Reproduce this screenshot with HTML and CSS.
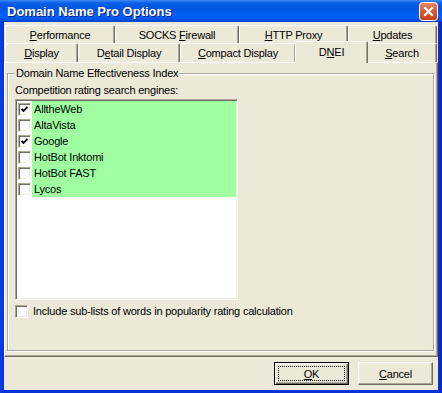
FILE: index.html
```html
<!DOCTYPE html>
<html lang="en">
<head>
    <meta charset="UTF-8">
    <title>Domain Name Pro Options</title>
    <link rel="stylesheet" href="styles.css">
</head>
<body>
    <div class="window">
        <!-- Title bar -->
        <div class="titlebar">
            <span class="title">Domain Name Pro Options</span>
            <span class="close" aria-label="Close">
                <svg width="19" height="19" viewBox="0 0 19 19">
                    <defs>
                        <linearGradient id="closeGrad" x1="0" y1="0" x2="0" y2="1">
                            <stop offset="0" stop-color="#e98c6a"/>
                            <stop offset="0.5" stop-color="#d9582f"/>
                            <stop offset="1" stop-color="#c4401b"/>
                        </linearGradient>
                    </defs>
                    <rect x="0.5" y="0.5" width="18" height="18" rx="3" fill="url(#closeGrad)" stroke="#fff"/>
                    <path d="M6 6 L13 13 M13 6 L6 13" stroke="#fff" stroke-width="2.2" stroke-linecap="square"/>
                </svg>
            </span>
        </div>

        <div class="client">
            <!-- Tabs, two rows -->
            <div class="tabs">
                <div class="tab-row row1">
                    <div class="tab" style="width:110px"><span><u>P</u>erformance</span></div>
                    <div class="tab" style="width:124px"><span>SOCKS <u>F</u>irewall</span></div>
                    <div class="tab" style="width:109px"><span><u>H</u>TTP Proxy</span></div>
                    <div class="tab" style="width:89px"><span><u>U</u>pdates</span></div>
                </div>
                <div class="tab-row row2">
                    <div class="tab" style="width:73px"><span><u>D</u>isplay</span></div>
                    <div class="tab" style="width:102px"><span>D<u>e</u>tail Display</span></div>
                    <div class="tab" style="width:116px"><span><u>C</u>ompact Display</span></div>
                    <div class="tab active" style="width:73px"><span>D<u>N</u>EI</span></div>
                    <div class="tab" style="width:70px"><span><u>S</u>earch</span></div>
                </div>
            </div>

            <div class="panel">
                <div class="group">
                    <span class="group-title">Domain Name Effectiveness Index</span>
                    <div class="list-label">Competition rating search engines:</div>
                    <div class="listbox">
                        <div class="item"><span class="check"><svg width="7" height="7" viewBox="0 0 7 7"><polyline points="0.5,3 2.5,5 6.5,1" fill="none" stroke="#000" stroke-width="1.8"/></svg></span><span class="item-text">AlltheWeb</span></div>
                        <div class="item"><span class="check"></span><span class="item-text">AltaVista</span></div>
                        <div class="item"><span class="check"><svg width="7" height="7" viewBox="0 0 7 7"><polyline points="0.5,3 2.5,5 6.5,1" fill="none" stroke="#000" stroke-width="1.8"/></svg></span><span class="item-text">Google</span></div>
                        <div class="item"><span class="check"></span><span class="item-text">HotBot Inktomi</span></div>
                        <div class="item"><span class="check"></span><span class="item-text">HotBot FAST</span></div>
                        <div class="item"><span class="check"></span><span class="item-text">Lycos</span></div>
                    </div>
                    <div class="option">
                        <span class="check"></span>
                        <span>Include sub-lists of words in popularity rating calculation</span>
                    </div>
                </div>
            </div>

            <div class="buttons">
                <button class="btn default"><span class="focus"><u>O</u>K</span></button>
                <button class="btn"><span><u>C</u>ancel</span></button>
            </div>
        </div>
    </div>
</body>
</html>
```

FILE: styles.css
```css
* {
    margin: 0;
    padding: 0;
    box-sizing: border-box;
}

html, body {
    width: 442px;
    height: 393px;
    overflow: hidden;
}

body {
    font-family: "Liberation Sans", Arial, sans-serif;
    font-size: 11px;
    letter-spacing: -0.2px;
    color: #000;
}

.window {
    width: 442px;
    height: 393px;
    display: flex;
    flex-direction: column;
    background: linear-gradient(to right, #0a3ee6 0, #0831d9 4px, #0831d9 438px, #0627b8 442px);
}

/* Title bar */
.titlebar {
    height: 22px;
    display: flex;
    align-items: center;
    justify-content: space-between;
    padding: 0 4px 0 7px;
    background: linear-gradient(#3b8cf5 0, #0a5fe8 3px, #0054e3 9px, #0062f7 16px, #0053e1 20px, #003dd0 22px);
}

.title {
    color: #fff;
    font-weight: bold;
    font-size: 13px;
    letter-spacing: 0;
    text-shadow: 1px 1px 0 #0a1e8c;
}

.close {
    display: flex;
}

/* Client area */
.client {
    flex: 1;
    margin: 0 4px 3px 4px;
    background: #ece9d8;
    display: flex;
    flex-direction: column;
    padding-top: 3px;
}

.tabs {
    margin-left: 1px;
    width: 432px;
}

.tab-row {
    display: flex;
}

.tab {
    display: flex;
    align-items: center;
    justify-content: center;
    background: #ece9d8;
    border-top: 1px solid #fff;
    border-left: 1px solid #fff;
    border-right: 1px solid #716f64;
    box-shadow: inset -1px 0 #aca899;
    border-radius: 2px 2px 0 0;
    white-space: nowrap;
}

.row1 .tab {
    height: 18px;
}

.row2 .tab {
    height: 19px;
}

.row2 .tab.active {
    height: 22px;
    margin: -2px -1px -1px -1px;
    padding-bottom: 2px;
    position: relative;
    z-index: 1;
}

.panel {
    height: 295px;
    background: #ece9d8;
    border-top: 1px solid #fff;
    border-left: 1px solid #fff;
    border-right: 1px solid #716f64;
    border-bottom: 1px solid #716f64;
    box-shadow: inset -1px -1px #aca899;
    padding: 10px 3px 5px 2px;
}

/* Group box */
.group {
    height: 100%;
    position: relative;
    border: 1px solid #aca899;
    box-shadow: 1px 1px 0 #fff, inset 1px 1px 0 #fff;
    padding: 10px 7px 0 7px;
}

.group-title {
    position: absolute;
    top: -7px;
    left: 7px;
    padding: 0 1px;
    line-height: 13px;
    background: #ece9d8;
}

.list-label {
    line-height: 13px;
    margin-bottom: 2px;
}

.listbox {
    width: 223px;
    height: 201px;
    background: #fff;
    border: 1px solid;
    border-color: #aca899 #fff #fff #aca899;
    box-shadow: inset 1px 1px #716f64, inset -1px -1px #f1efe2;
    padding: 1px;
}

.item {
    height: 16px;
    display: flex;
    align-items: center;
    padding-left: 1px;
}

.item-text {
    flex: 1;
    height: 16px;
    line-height: 16px;
    margin-left: 1px;
    padding-left: 2px;
    background: #a0ffa0;
}

/* Checkbox */
.check {
    width: 13px;
    height: 13px;
    flex-shrink: 0;
    display: flex;
    align-items: center;
    justify-content: center;
    background: #fff;
    border: 1px solid;
    border-color: #aca899 #fff #fff #aca899;
    box-shadow: inset 1px 1px #716f64, inset -1px -1px #f1efe2;
}

.check svg {
    display: block;
}

.option {
    display: flex;
    align-items: center;
    gap: 5px;
    margin-top: 5px;
    line-height: 13px;
}

/* Dialog buttons */
.buttons {
    flex: 1;
    display: flex;
    justify-content: flex-end;
    align-items: flex-start;
    gap: 9px;
    padding: 5px 5px 0 0;
}

.btn {
    width: 75px;
    height: 23px;
    font: inherit;
    letter-spacing: inherit;
    color: #000;
    background: #ece9d8;
    border: 1px solid;
    border-color: #fff #716f64 #716f64 #fff;
    box-shadow: inset -1px -1px #aca899, inset 1px 1px #f1efe2;
    display: flex;
    align-items: stretch;
    padding: 3px;
}

.btn span {
    flex: 1;
    display: flex;
    align-items: center;
    justify-content: center;
    border: 1px solid transparent;
}

.btn.default {
    border: 1px solid #000;
    box-shadow: inset 1px 1px #fff, inset -1px -1px #716f64, inset -2px -2px #aca899;
}

.btn .focus {
    border: 1px dotted #000;
}
```
